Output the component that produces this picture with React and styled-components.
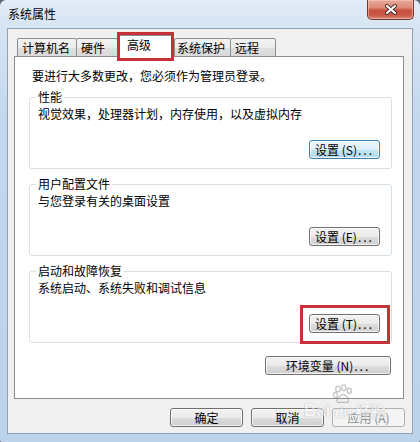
import React from "react";
import styled, { createGlobalStyle } from "styled-components";

const Global = createGlobalStyle`
  html, body { margin: 0; padding: 0; background: #5d646d; }
  body { font-family: "Noto Sans CJK SC", "Liberation Sans", sans-serif; font-size: 12px; color: #000; }
  * { box-sizing: border-box; }
`;

const Window = styled.div`
  position: relative;
  width: 420px;
  height: 442px;
  border-radius: 6px 6px 2px 2px;
  background: linear-gradient(180deg, #e3ecf7 0px, #d6e4f3 28px, #c3d7ee 120px, #bcd3ec 442px);
  display: flex;
  flex-direction: column;
  padding: 0 7px 8px 7px;
  overflow: hidden;
`;

const TitleBar = styled.div`
  height: 28px;
  display: flex;
  align-items: flex-start;
  justify-content: space-between;
`;

const Title = styled.div`
  margin: 7px 0 0 1px;
  font-size: 12px;
  line-height: 14px;
  color: #000;
`;

const CloseButton = styled.div`
  width: 47px;
  height: 20px;
  margin-right: -1px;
  border: 1px solid #6d3a33;
  border-top: none;
  border-radius: 0 0 5px 5px;
  background: linear-gradient(180deg, #e9a898 0%, #dc8a78 40%, #c8503d 55%, #c95a48 80%, #dd8a78 100%);
  box-shadow: inset 0 0 0 1px rgba(255, 220, 210, 0.45);
  display: flex;
  align-items: center;
  justify-content: center;
`;

const Client = styled.div`
  flex: 1;
  background: #f0f0f0;
  border: 1px solid #8fa1b8;
  padding: 6px 7px 6px 6px;
  display: flex;
  flex-direction: column;
`;

const TabStrip = styled.div`
  display: flex;
  align-items: flex-end;
  height: 22px;
  padding-left: 3px;
  margin-bottom: -1px;
  position: relative;
  z-index: 2;
`;

const Tab = styled.div`
  position: relative;
  width: ${(p) => p.$w}px;
  height: ${(p) => (p.$active ? 22 : 19)}px;
  padding-left: ${(p) => p.$pl}px;
  margin-left: ${(p) => p.$ml || 0}px;
  line-height: ${(p) => (p.$active ? 18 : 17)}px;
  font-size: 12px;
  border: 1px solid #898c95;
  border-bottom: ${(p) => (p.$active ? "none" : "1px solid #898c95")};
  border-radius: 2px 2px 0 0;
  background: ${(p) =>
    p.$active ? "#ffffff" : "linear-gradient(180deg, #f4f4f4 0%, #ececec 50%, #e0e0e0 51%, #d9d9d9 100%)"};
  white-space: nowrap;
  &::after {
    content: ${(p) => (p.$marked ? '""' : "none")};
    position: absolute;
    top: -4px;
    left: -2px;
    right: -1px;
    bottom: -4px;
    border: 3px solid #c82f38;
  }
`;

const Panel = styled.div`
  height: 343px;
  margin-right: 1px;
  background: #fff;
  border: 1px solid #898c95;
  padding: 12px 11px 0 14px;
  display: flex;
  flex-direction: column;
`;

const Intro = styled.div`
  margin-left: 3px;
  line-height: 14px;
  height: 14px;
  margin-bottom: 8px;
`;

const Groups = styled.div`
  display: flex;
  flex-direction: column;
  gap: 9px;
`;

const Group = styled.fieldset`
  margin: 0;
  min-width: 0;
  border: 1px solid #d5dfe5;
  border-radius: 3px;
  padding: 4px 11px 9px 8px;
  display: flex;
  flex-direction: column;
`;

const Legend = styled.legend`
  padding: 0 2px;
  margin-left: -2px;
  font-size: 12px;
  line-height: 12px;
  height: 12px;
`;

const Desc = styled.div`
  line-height: 14px;
  height: 14px;
`;

const ButtonRow = styled.div`
  display: flex;
  justify-content: flex-end;
  gap: ${(p) => p.$gap || 0}px;
  margin-top: ${(p) => p.$mt || 0}px;
  margin-right: ${(p) => p.$mr || 0}px;
`;

const Button = styled.button`
  position: relative;
  width: ${(p) => p.$w}px;
  height: 19px;
  padding: 0;
  font-family: "Noto Sans CJK SC", "Liberation Sans", sans-serif;
  font-size: 12px;
  line-height: 17px;
  color: ${(p) => (p.$disabled ? "#8a8a8a" : "#000")};
  border: 1px solid ${(p) => (p.$hot ? "#3c7fb1" : p.$disabled ? "#adb2b5" : "#707070")};
  border-radius: 3px;
  background: ${(p) =>
    p.$hot
      ? "linear-gradient(180deg, #eaf6fd 0%, #dcf0fb 50%, #c4e5f6 51%, #b2daf0 100%)"
      : p.$disabled
      ? "#f4f4f4"
      : "linear-gradient(180deg, #f2f2f2 0%, #ebebeb 50%, #dddddd 51%, #cfcfcf 100%)"};
  box-shadow: inset 0 0 0 1px rgba(255, 255, 255, ${(p) => (p.$disabled ? 0 : 0.75)});
  white-space: nowrap;
  &::after {
    content: ${(p) => (p.$marked ? '""' : "none")};
    position: absolute;
    top: -10px;
    left: -10px;
    right: -11px;
    bottom: -12px;
    border: 3px solid #c82f38;
  }
`;

const Dots = styled.span`
  letter-spacing: 2px;
  margin-left: 1px;
`;

const Spacer = styled.div`
  flex: 1;
`;

const BottomRow = styled.div`
  display: flex;
  justify-content: flex-end;
  gap: 8px;
  margin-top: 9px;
`;

const Watermark = styled.div`
  position: absolute;
  left: 304px;
  top: 384px;
  display: flex;
  align-items: flex-end;
  opacity: 0.5;
  pointer-events: none;
  color: #ffffff;
  font-family: "Liberation Sans", sans-serif;
  font-weight: bold;
  font-size: 17px;
  line-height: 18px;
  text-shadow: 0 0 1px #808080, 0 0 1px #808080;
`;

const PawWrap = styled.span`
  display: flex;
  flex-direction: column;
  align-items: center;
  margin: 0 1px 0 2px;
  font-size: 14px;
  line-height: 14px;
`;

const WaterCn = styled.span`
  font-family: "Noto Sans CJK SC", sans-serif;
  font-size: 15px;
  line-height: 18px;
  font-weight: bold;
`;

function CloseIcon() {
  return (
    <svg width="14" height="11" viewBox="0 0 14 11">
      <path d="M3 2 L11 9 M11 2 L3 9" stroke="#4a2a25" strokeWidth="4" strokeLinecap="round" />
      <path d="M3 2 L11 9 M11 2 L3 9" stroke="#ffffff" strokeWidth="2.2" strokeLinecap="round" />
    </svg>
  );
}

function Paw() {
  return (
    <svg width="22" height="22" viewBox="0 0 26 26">
      <g fill="none" stroke="#8a8a8a" strokeWidth="1.5">
        <ellipse cx="7" cy="6" rx="2.6" ry="3.4" />
        <ellipse cx="14" cy="4.5" rx="2.6" ry="3.4" />
        <ellipse cx="20.5" cy="8" rx="2.4" ry="3.2" />
        <ellipse cx="4" cy="13" rx="2.3" ry="3" />
        <path d="M8 22 C5 22 5 17 9 15 C11 13 13 11 15 13 C18 15 21 18 19 21 C17 23 13 21 8 22 Z" />
      </g>
    </svg>
  );
}

export default function App() {
  return (
    <>
      <Global />
      <Window>
        <TitleBar>
          <Title>系统属性</Title>
          <CloseButton>
            <CloseIcon />
          </CloseButton>
        </TitleBar>
        <Client>
          <TabStrip>
            <Tab $w={60} $pl={4}>计算机名</Tab>
            <Tab $w={42} $pl={4} $ml={-1}>硬件</Tab>
            <Tab $w={56} $pl={8} $ml={0} $active $marked>高级</Tab>
            <Tab $w={57} $pl={2} $ml={0}>系统保护</Tab>
            <Tab $w={46} $pl={4} $ml={-1}>远程</Tab>
          </TabStrip>
          <Panel>
            <Intro>要进行大多数更改，您必须作为管理员登录。</Intro>
            <Groups>
              <Group>
                <Legend>性能</Legend>
                <Desc>视觉效果，处理器计划，内存使用，以及虚拟内存</Desc>
                <ButtonRow $mt={19}>
                  <Button $w={71} $hot>设置 (S)<Dots>...</Dots></Button>
                </ButtonRow>
              </Group>
              <Group>
                <Legend>用户配置文件</Legend>
                <Desc>与您登录有关的桌面设置</Desc>
                <ButtonRow $mt={19}>
                  <Button $w={71}>设置 (E)<Dots>...</Dots></Button>
                </ButtonRow>
              </Group>
              <Group>
                <Legend>启动和故障恢复</Legend>
                <Desc>系统启动、系统失败和调试信息</Desc>
                <ButtonRow $mt={19}>
                  <Button $w={71} $marked>设置 (T)<Dots>...</Dots></Button>
                </ButtonRow>
              </Group>
            </Groups>
            <ButtonRow $mt={13} $mr={1}>
              <Button $w={126}>环境变量 (N)<Dots>...</Dots></Button>
            </ButtonRow>
            <Spacer />
          </Panel>
          <BottomRow>
            <Button $w={73}>确定</Button>
            <Button $w={73}>取消</Button>
            <Button $w={73} $disabled>应用 (A)</Button>
          </BottomRow>
        </Client>
        <Watermark>
          Bai
          <PawWrap>
            <Paw />
            du
          </PawWrap>
          <WaterCn>经验</WaterCn>
        </Watermark>
      </Window>
    </>
  );
}
